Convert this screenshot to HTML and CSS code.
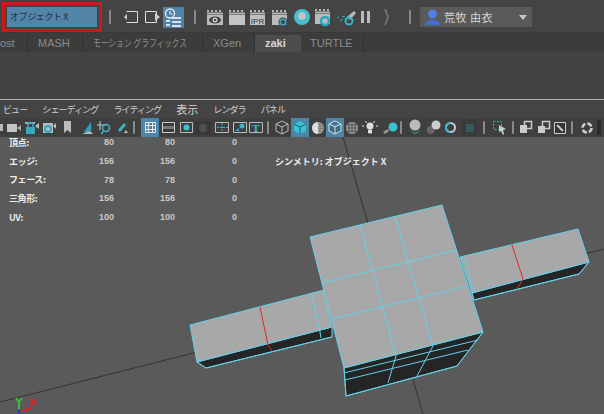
FILE: index.html
```html
<!DOCTYPE html>
<html lang="ja">
<head>
<meta charset="utf-8">
<title>Maya</title>
<link rel="stylesheet" href="styles.css">
</head>
<body>
<div class="app">
  <header class="status">
    <div class="sym-field"><span class="sym-box">オブジェクト X</span></div>
    <div class="grip"></div>
    <svg class="ic" width="22" height="20"><path d="M1 10l3-3v6z" fill="#ccc"/><path d="M3.500 4.500h11v11h-11" fill="none" stroke="#ddd"/></svg>
    <svg class="ic" width="18" height="20"><path d="M.500 4.500h11v11h-11z" fill="none" stroke="#ddd"/><path d="M10 6l5 4-5 4z" fill="#ccc"/></svg>
    <svg class="ic ic-on" width="21" height="21"><circle cx="7" cy="6.500" r="4.500" fill="none" stroke="#eee" stroke-width="1.300"/><path d="M7 4v3h2.500" fill="none" stroke="#eee"/><path d="M3 13h4v2h-4zM3 17h4v2h-4zM9 10h9v2h-9zM9 14h9v2h-9zM9 18h9v2h-9z" fill="#dde"/></svg>
    <div class="grip g2"></div>
    <svg class="ic" width="22" height="20"><path class="perf" d="M1 4h2M5 4h2M9 4h2M13 4h2M1 6.500h16"/><path d="M1 8h16v10h-16z" fill="#bbb"/><ellipse cx="9" cy="13" rx="6" ry="3.500" fill="#444"/><circle cx="9" cy="13" r="2.500" fill="#ccc"/><circle cx="9" cy="13" r="1" fill="#222"/></svg>
    <svg class="ic" width="21" height="20"><path class="perf" d="M1 4h2M5 4h2M9 4h2M13 4h2M1 6.500h16"/><path d="M1 8h16v10h-16z" fill="#c4c4c4"/></svg>
    <svg class="ic" width="22" height="20"><path class="perf" d="M1 4h2M5 4h2M9 4h2M13 4h2M1 6.500h15"/><path d="M1 8h15v10h-15z" fill="#c0c0c0"/><text x="8.500" y="16.500" class="ipr">IPR</text></svg>
    <svg class="ic" width="22" height="20"><path class="perf" d="M1 4h2M5 4h2M9 4h2M13 4h2M1 6.500h15"/><path d="M1 8h15v10h-15z" fill="#bbb"/><circle cx="12" cy="15" r="4.500" fill="#444"/><circle cx="12" cy="15" r="2.800" fill="none" stroke="#3aa3c0" stroke-width="1.600"/></svg>
    <svg class="ic" width="21" height="20"><circle cx="9" cy="10" r="8" fill="#45bed0"/><circle cx="9" cy="9" r="3.800" fill="#c4c4c4"/></svg>
    <svg class="ic" width="22" height="20"><path class="perf" d="M1 3h2M5 3h2M9 3h2M13 3h2M1 5.500h15"/><path d="M1 7h15v10h-15z" fill="#bbb"/><circle cx="11" cy="14" r="4" fill="none" stroke="#2aa7c0" stroke-width="2.500"/></svg>
    <svg class="ic" width="24" height="20"><path d="M11 10l7-6 2 2-6 7z" fill="#bbb"/><path d="M1 11l2-1M4 14l3-2M6 9l3 1" stroke="#39b4c8"/><circle cx="13" cy="14" r="3.500" fill="none" stroke="#39b4c8" stroke-width="2"/></svg>
    <svg class="ic" width="17" height="20"><path d="M1 4h3v12h-3zM7 4h3v12h-3z" fill="#bbb"/></svg>
    <svg class="ic" width="32" height="20"><path d="M8 2l3 8-3 8" fill="none" stroke="#707070" stroke-width="2"/></svg>
    <div class="grip g3"></div>
    <div class="user">
      <svg class="ic" width="17" height="18"><circle cx="8.500" cy="6" r="4.500" fill="#4f7fe0"/><path d="M1 17c0-4 4-4 5-5h5c1 1 5 1 5 5z" fill="#3e6fd6"/></svg>
      <span class="user-name">荒牧 由衣</span>
      <span class="caret"></span>
    </div>
  </header>
  <nav class="tabs">
    <span class="tab cut">ost</span>
    <span class="tab">MASH</span>
    <span class="tab"><span class="squeeze">モーション グラフィックス</span></span>
    <span class="tab">XGen</span>
    <span class="tab tab-on">zaki</span>
    <span class="tab">TURTLE</span>
  </nav>
  <section class="shelf"></section>
  <div class="panel-line"></div>
  <nav class="menu">
    <span>ビュー</span><span>シェーディング</span><span>ライティング</span><span class="kanji">表示</span><span>レンダラ</span><span>パネル</span>
  </nav>
  <div class="tools">
    <svg class="ic" width="7" height="19"><path d="M0 6h3v7h-3z" fill="#bbb"/></svg>
    <svg class="ic" width="18" height="19"><path d="M0 6h10v8h-10z" fill="#c4c4c4"/><path d="M10 10l4-3v6z" fill="#aaa"/></svg>
    <svg class="ic" width="18" height="19"><path d="M0 4h10v2h-10z" fill="#aaa"/><path d="M1 9h9v7h-9z" fill="#39a9bf"/><path d="M3 9v-2a2.500 2.500 0 0 1 5 0v2" fill="none" stroke="#39a9bf" stroke-width="1.500"/><path d="M10 8l4-3v6z" fill="#bbb"/></svg>
    <svg class="ic" width="21" height="19"><path d="M0 5h10v10h-10z" fill="#bbb"/><circle cx="5" cy="11" r="3" fill="none" stroke="#2aa7c0" stroke-width="2"/><path d="M10 8l3-3v6z" fill="#bbb"/></svg>
    <svg class="ic" width="17" height="19"><path d="M0 3h7v12l-3.500-3-3.500 3z" fill="#bbb"/></svg>
    <svg class="ic" width="16" height="19"><path d="M3 14l7-10 .5 8-5 3z" fill="#31a0b8"/><path d="M1 16h11l-3-3z" fill="#bbb"/></svg>
    <svg class="ic" width="19" height="19"><path d="M3 3v9M0 7h9" stroke="#ccc" fill="none"/><circle cx="9" cy="10" r="3.500" fill="none" stroke="#39b4c8" stroke-width="1.500"/><path d="M7 13l-3 3" stroke="#39b4c8" stroke-width="1.500"/></svg>
    <svg class="ic" width="15" height="19"><path d="M2 12l6-7 2 2-6 7z" fill="#39b4c8"/><path d="M8 15l2-3 2 3z" fill="#bbb"/></svg>
    <div class="grip g4"></div>
    <svg class="ic ic-on tool-on" width="18" height="19"><path d="M4.500 4.500h10v10h-10zM7.500 4.500v10M11.500 4.500v10M4.500 7.500h10M4.500 11.500h10" fill="none" stroke="#e8e8e8"/></svg>
    <svg class="ic" width="18" height="19"><path d="M1.500 4.500h12v10h-12z" fill="#3a3a3a" stroke="#ccc"/><path d="M2 8h11v3h-11z" fill="#777"/></svg>
    <svg class="ic" width="16" height="19"><path d="M1.500 4.500h12v10h-12z" fill="none" stroke="#bbb"/><circle cx="7.500" cy="9.500" r="3" fill="#3cc0d4"/></svg>
    <svg class="ic" width="19" height="19"><path d="M0 3h16v14h-16z" fill="#383838"/><circle cx="8" cy="10" r="4" fill="#505050"/></svg>
    <svg class="ic" width="18" height="19"><path d="M1.500 4.500h13v10h-13z" fill="none" stroke="#bbb"/><path d="M3 9.500h2M6 9.500h2M9 9.500h2M12 9.500h2M8 5v9" stroke="#39b4c8" stroke-dasharray="2 1"/></svg>
    <svg class="ic" width="17" height="19"><path d="M1.500 4.500h13v10h-13z" fill="none" stroke="#bbb"/><path d="M3 13l4-3v3z" fill="#39b4c8"/><circle cx="10" cy="8" r="2.500" fill="#39b4c8"/></svg>
    <svg class="ic" width="16" height="19"><path d="M.500 4.500h13v10h-13z" fill="none" stroke="#bbb"/><text x="7" y="13.500" class="tee">T</text></svg>
    <div class="grip g5"></div>
    <svg class="ic" width="16" height="19"><path d="M7 3l6 3v7l-6 3-6-3v-7zM1 6l6 3 6-3M7 9v7" fill="none" stroke="#bbb"/></svg>
    <svg class="ic ic-on tool-on" width="18" height="19"><path d="M9 3l6 3v7l-6 3-6-3v-7z" fill="#3cc0d4"/><path d="M3 6l6 3 6-3M9 9v7" fill="none" stroke="#1e5a66"/></svg>
    <svg class="ic" width="15" height="19"><circle cx="7" cy="10" r="6" fill="#999"/><path d="M7 4a6 6 0 0 0 0 12z" fill="#ddd"/><path d="M9 6v8M11 8v4" stroke="#555" stroke-dasharray="1 1"/></svg>
    <svg class="ic ic-on tool-on" width="18" height="19"><path d="M9 3l6 3v7l-6 3-6-3v-7zM3 6l6 3 6-3M9 9v7" fill="#3a6f86" stroke="#ddd"/></svg>
    <svg class="ic" width="16" height="19"><circle cx="6" cy="10" r="6" fill="#aaa"/><path d="M1 7h10M0 10h12M1 13h10M3 5v10M6 4v12M9 5v10" stroke="#4a4a4a"/></svg>
    <svg class="ic" width="21" height="19"><circle cx="8" cy="8" r="3.500" fill="#ddd"/><path d="M6.500 12h3v3h-3zM2 8h-2M16 8h-2M3 3l2 2M13 3l-2 2" stroke="#ddd" fill="#ddd"/></svg>
    <svg class="ic" width="17" height="19"><circle cx="10" cy="9" r="4.500" fill="#3cc0d4"/><path d="M0 14l5-3 1 2-4 3z" fill="#999"/></svg>
    <div class="grip g6"></div>
    <svg class="ic" width="18" height="19"><circle cx="6" cy="7" r="5.500" fill="#bbb"/><path d="M0 12l6 4 7-4-7 3z" fill="#39b4c8"/></svg>
    <svg class="ic" width="17" height="19"><circle cx="3.500" cy="12" r="4" fill="#666"/><circle cx="9" cy="7" r="4.500" fill="#ccc"/></svg>
    <svg class="ic" width="17" height="19"><circle cx="6.500" cy="9.500" r="4.500" fill="none" stroke="#ccc" stroke-width="2"/><path d="M6.500 5a4.500 4.500 0 0 0 0 9" fill="none" stroke="#39b4c8" stroke-width="2"/></svg>
    <svg class="ic" width="20" height="19"><path d="M0 1h16v17h-16z" fill="#3a3a3a"/><path d="M5 6h8v8h-8z" fill="#385a60"/></svg>
    <div class="grip g7"></div>
    <svg class="ic" width="18" height="19"><path d="M1.500 3.500h8v8h-8z" fill="none" stroke="#39b4c8" stroke-dasharray="2 1.500"/><path d="M7 7l7 4-3 1 1 4-1 1-2-4-2 1z" fill="#ccc"/></svg>
    <div class="grip g8"></div>
    <svg class="ic" width="18" height="19"><path d="M5.500 3.500h7v7h-7z" fill="none" stroke="#ccc" stroke-width="1.500"/><path d="M1 7h7v8h-7z" fill="#ccc"/></svg>
    <svg class="ic" width="17" height="19"><path d="M5.500 3.500h7v7h-7z" fill="none" stroke="#ccc" stroke-width="1.500"/><path d="M1 8h7v7h-7z" fill="#ccc"/></svg>
    <svg class="ic" width="15" height="19"><path d="M.500 4.500h11v11h-11z" fill="#333" stroke="#ccc"/><path d="M3 7l6 6" stroke="#ccc" stroke-width="2"/></svg>
    <div class="grip g9"></div>
    <svg class="ic" width="16" height="19"><circle cx="6" cy="10" r="4.500" fill="none" stroke="#ccc" stroke-width="2.500" stroke-dasharray="5 2"/></svg>
    <svg class="ic" width="4" height="19"><path d="M0 2h4v15h-4z" fill="#2c2c2c"/></svg>
  </div>
  <main class="viewport">
    <svg class="scene" viewBox="0 137 604 277" width="604" height="277">
      <g class="axis-lines">
        <path d="M343 137L423 414"/>
        <path d="M0 402L604 249"/>
      </g>
      <g class="edges">
        <path class="dark" d="M197 362L332 327V337L206 368z"/>
        <path class="top" d="M190 325L324 290L332 327L197 362z"/>
        <path d="M197 362L206 368L332 337M312 295L320 332L321 338"/>
        <path class="dark" d="M472 293L589 262L579 274L474 300z"/>
        <path class="top" d="M460 257L578 229L589 262L472 293z"/>
        <path d="M465 257L474 293M472 293L474 300L579 274L589 262"/>
        <path class="dark" d="M344 368L483 332L457 366L346 396z"/>
        <path class="dark" d="M313 240L318 247L326 293L320 270z"/>
        <path class="top" d="M310 237L442 205L483 332L344 368z"/>
        <path d="M360 225L396 356M395 217L433 346M322 283L456 250M332 319L468 286"/>
        <path d="M344 373L478 340M345 380L468 350M396 356L388 383M433 346L417 376M483 332L457 366L346 396L344 368"/>
      </g>
      <path class="red" d="M260 307L268 345L272 351M512 245L523 279L517 289"/>
      <g class="gizmo">
        <path class="gy" d="M16 398L19 402L22 398M19 402V409"/>
        <path class="gx" d="M30 399L36 405M36 399L30 405M22 411L31 408"/>
        <path class="gz" d="M19 410V414"/>
      </g>
    </svg>
    <div class="hud">
      <span class="lbl">頂点:</span><span>80</span><span>80</span><span>0</span><span></span>
      <span class="lbl">エッジ:</span><span>156</span><span>156</span><span>0</span><span class="lbl sym">シンメトリ: オブジェクト X</span>
      <span class="lbl">フェース:</span><span>78</span><span>78</span><span>0</span><span></span>
      <span class="lbl">三角形:</span><span>156</span><span>156</span><span>0</span><span></span>
      <span class="lbl">UV:</span><span>100</span><span>100</span><span>0</span><span></span>
    </div>
  </main>
</div>
</body>
</html>
```
FILE: styles.css
```css
* { box-sizing: border-box; }
html, body { margin: 0; padding: 0; height: 100%; overflow: hidden; }
body { background: #444; font-family: "Noto Sans CJK JP", "Liberation Sans", sans-serif; }
.app { width: 604px; height: 414px; display: flex; flex-direction: column; }

.status { height: 33px; background: #444; display: flex; align-items: center; flex: none; padding-top: 2px; border-bottom: 1px solid #383838; }
.sym-field { width: 100px; height: 30px; margin-left: 2px; border: 3px solid #c81a1a; padding: 2px; flex: none; }
.sym-box { display: block; height: 100%; background: #5285a8; color: #24313a; font-size: 9px; letter-spacing: -.4px; line-height: 20px; padding-left: 3px; white-space: nowrap; }
.grip { width: 2px; height: 14px; background: #8a8a8a; flex: none; border-radius: 1px; margin: 0 12px 0 7px; }
.g2 { margin: 0 10px 0 10px; }
.g3 { margin: 0 9px 0 0; }
.ic { display: block; flex: none; }
.ic-on { background: #4d85a8; }
.perf { stroke: #b4b4b4; stroke-width: 2; fill: none; }
.ipr { font: 8px "Liberation Sans", sans-serif; fill: #333; text-anchor: middle; }
.tee { font: bold 11px "Liberation Serif", serif; fill: #3cc0d4; text-anchor: middle; }
.user { width: 112px; height: 20px; background: #5a5a5a; display: flex; align-items: center; padding-left: 4px; flex: none; position: relative; }
.user-name { color: #d6d6d6; font-size: 11px; letter-spacing: .5px; margin-left: 3px; white-space: nowrap; }
.caret { width: 0; height: 0; border: 4px solid transparent; border-top: 5px solid #c8c8c8; border-bottom: 0; margin-left: 26px; }

.tabs { height: 19px; background: #3c3c3c; display: flex; align-items: center; flex: none; padding-top: 1px; }
.tab { height: 17px; padding: 0 0 0 10px; font: 11px/17px "Liberation Sans", "Noto Sans CJK JP", sans-serif; color: #8c8c8c; border-right: 1px solid #303030; white-space: nowrap; overflow: hidden; }
.cut { width: 28px; padding: 0; }
.tab:nth-child(2) { width: 55px; }
.tab:nth-child(3) { width: 120px; }
.squeeze { display: inline-block; font-size: 10px; transform: scaleX(.77); transform-origin: left center; }
.tab:nth-child(4) { width: 52px; }
.tab-on { width: 46px; background: #4d4d4d; color: #d8d8d8; font-weight: bold; border: 0; }
.tab:last-child { width: 63px; padding-left: 9px; }

.shelf { height: 47px; background: #424242; flex: none; }
.panel-line { height: 1px; background: #b4b4b4; flex: none; }
.menu { height: 18px; background: #444; display: flex; flex: none; gap: 15px; padding-left: 3px; align-items: center; color: #cfcfcf; font-size: 9px; letter-spacing: -.9px; white-space: nowrap; }
.menu span { display: block; }
.menu .kanji { font-size: 11px; letter-spacing: 0; }
.tools { height: 19px; background: #3f3f3f; display: flex; align-items: center; flex: none; }
.tool-on { margin-right: 2px; }
.g4 { margin: 0 6px 0 2px; }
.g5 { margin: 0 6px 0 2px; }
.g6 { margin: 0 7px 0 0; }
.g7 { margin: 0 7px 0 2px; }
.g8 { margin: 0 5px 0 2px; }
.g9 { margin: 0 8px 0 2px; }
.g4, .g5, .g6, .g7, .g8, .g9 { height: 13px; }

.viewport { flex: 1; position: relative; background: #5a5a5a; overflow: hidden; }
.scene { position: absolute; inset: 0; display: block; }
.axis-lines path { stroke: #333; fill: none; stroke-width: 1; }
.edges path { stroke: #62d2ea; stroke-width: 1; fill: none; stroke-linejoin: round; }
.edges .top { fill: #a8a8a8; }
.edges .dark { fill: #252525; }
.red { stroke: #e0282e; fill: none; stroke-width: 1; }
.gizmo path { fill: none; stroke-width: 2; }
.gy { stroke: #2fc43c; }
.gx { stroke: #d8242c; }
.gz { stroke: #2a36c8; }

.hud { position: absolute; left: 9px; top: -4px; display: grid; grid-template-columns: 85px 20px 61px 62px auto; grid-auto-rows: 18.700px; align-items: center; font: bold 9px "Liberation Sans", sans-serif; color: #c8c8c8; white-space: nowrap; }
.hud span:nth-child(5n+2), .hud span:nth-child(5n+3), .hud span:nth-child(5n+4) { text-align: right; }
.hud .lbl { font-family: "Noto Sans CJK JP", sans-serif; font-size: 9px; letter-spacing: -.4px; color: #ececec; }
.hud .sym { padding-left: 38px; letter-spacing: 0; }
```
